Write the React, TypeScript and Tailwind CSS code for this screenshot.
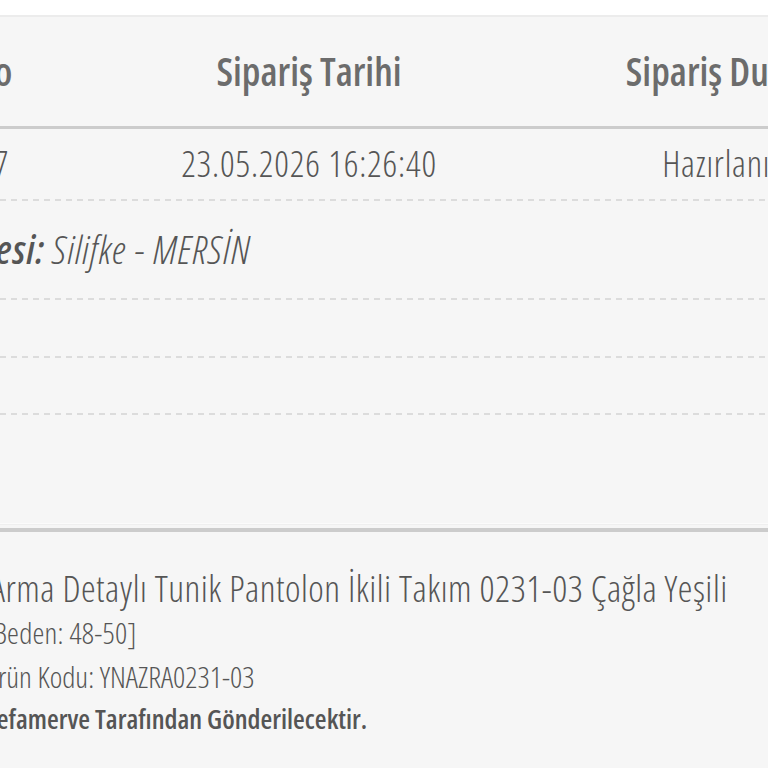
import React from "react";

function Dashed() {
  return (
    <div className="h-[2px] w-full bg-[repeating-linear-gradient(90deg,#dcdcdc_0px,#dcdcdc_6px,transparent_6px,transparent_11px)]" />
  );
}

export default function App() {
  return (
    <div className="h-[768px] w-[768px] overflow-hidden bg-[#f6f6f6] font-['Open_Sans',sans-serif] font-stretch-[75%] text-[#666]">
      {/* page top strip */}
      <div className="h-[15px] bg-white" />
      <div className="h-[2px] bg-[#ececec]" />

      {/* order table */}
      <div className="ml-[-250px] w-[1260px]">
        <div className="grid h-[112px] grid-cols-[380px_358px_496px] items-center border-b-[3px] border-[#cccccc] text-[39px] font-semibold text-[#6c6c6c]">
          <div className="text-center">Sipariş No</div>
          <div className="text-center">Sipariş Tarihi</div>
          <div className="text-center">Sipariş Durumu</div>
        </div>
        <div className="grid h-[70px] grid-cols-[380px_358px_496px] items-center text-[36px] font-light tracking-[0.8px] text-[#555]">
          <div className="text-center">123456787</div>
          <div className="text-center">23.05.2026 16:26:40</div>
          <div className="text-center">Hazırlanıyor</div>
        </div>
      </div>

      <Dashed />
      <div className="flex h-[97px] items-center">
        <p className="ml-[-200px] w-[451px] whitespace-nowrap text-right text-[39px] font-light italic tracking-[1px] text-[#555]">
          <span className="font-semibold">Teslimat Adresi:</span> Silifke - MERSİN
        </p>
      </div>
      <Dashed />
      <div className="h-[56px]" />
      <Dashed />
      <div className="h-[55px]" />
      <Dashed />
      <div className="h-[108px]" />
      <div className="h-px bg-[#fbfbfb]" />
      <div className="h-[4px] border-t border-[#efefef]" />
      <div className="h-[4px] bg-[#cccccc]" />

      {/* ordered item */}
      <div className="ml-[-16px] flex flex-col whitespace-nowrap pt-[33px] font-light text-[#555]">
        <p className="ml-[6px] text-[37px] leading-[46px] tracking-[0.5px]">
          Arma Detaylı Tunik Pantolon İkili Takım 0231-03 Çağla Yeşili
        </p>
        <p className="text-[30px] leading-[44px] tracking-[0.2px]">[Beden: 48-50]</p>
        <p className="ml-[-1px] text-[30px] leading-[43px]">Ürün Kodu: YNAZRA0231-03</p>
        <p className="text-[27px] font-semibold leading-[41px]">
          Vefamerve Tarafından Gönderilecektir.
        </p>
      </div>
    </div>
  );
}
